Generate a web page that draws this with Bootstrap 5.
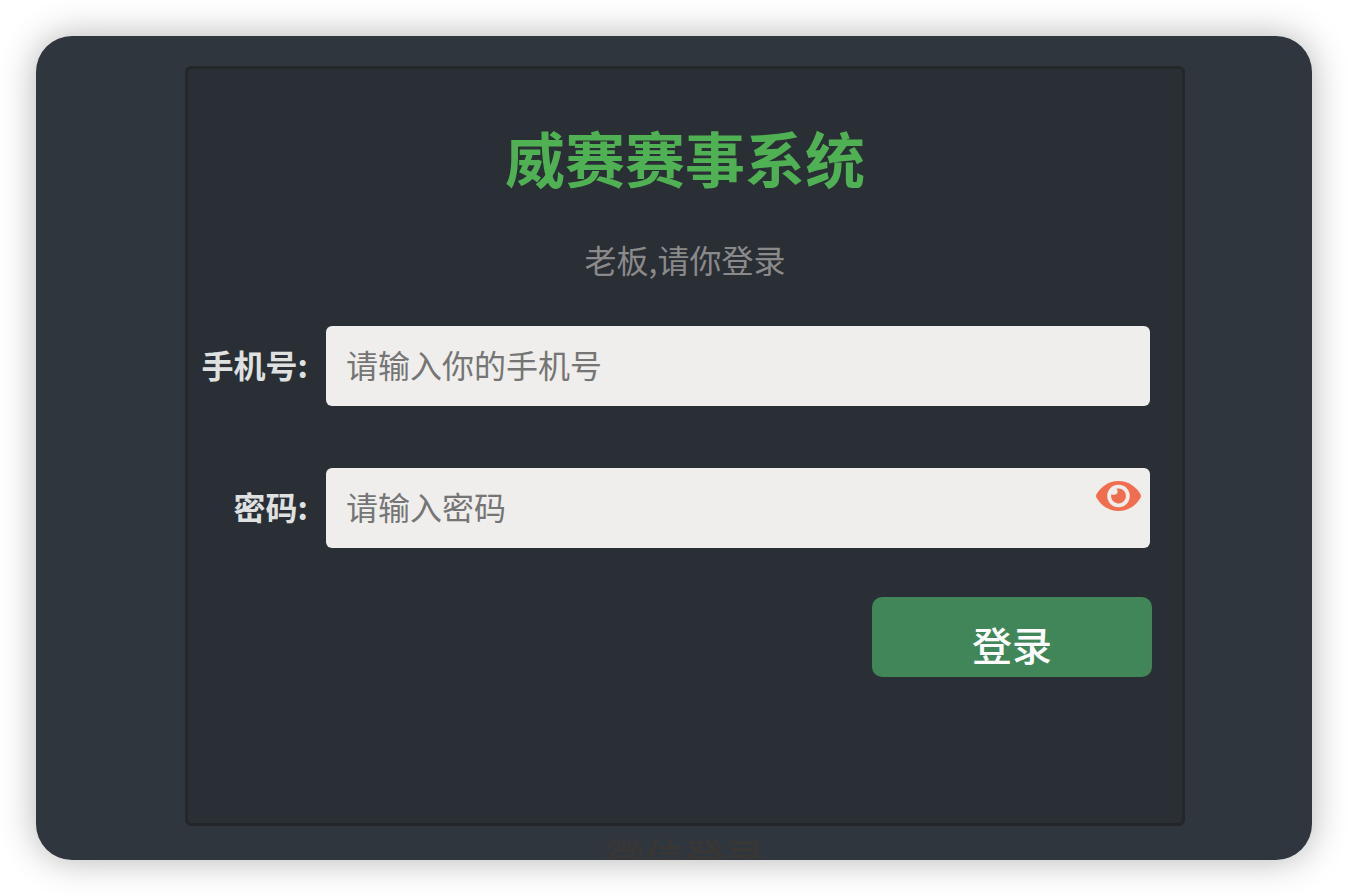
<!DOCTYPE html>
<html lang="zh-CN">
<head>
<meta charset="utf-8">
<meta name="viewport" content="width=device-width, initial-scale=1">
<title>威赛赛事系统</title>
<link href="https://cdn.jsdelivr.net/npm/bootstrap@5.3.0/dist/css/bootstrap.min.css" rel="stylesheet">
<style>
  body { font-family: "Noto Sans CJK SC", sans-serif; background: #fff; }
  .page-wrap { height: 100vh; padding: 36px; }
  .app-window { background: #30363e; border-radius: 36px; box-shadow: 0 0 36px rgba(0, 0, 0, .3); }
  .window-body { height: 100%; padding: 30px 0 0 22px; border-radius: 36px; }
  .login-panel { width: 100%; max-width: 1000px; padding: 46px 0 146px; background: #2a2e35; border: 3px solid #23272a; border-radius: 6px; }
  .login-title { color: #50b154; font-size: 60px; line-height: 84px; }
  .login-hint { color: #8a8a8a; font-size: 32px; line-height: 48px; margin: 36px 0 43px; }
  .field-row { gap: 18px; margin-bottom: 62px; padding-right: 32px; }
  .field-row.last-field { margin-bottom: 49px; }
  .field-label { width: 120px; color: #dfe1e1; font-size: 32px; line-height: 48px; padding-bottom: 4px; }
  .field-input, .field-input:focus { height: 80px; padding: 0 20px 4px; font-size: 32px; background: #efeeec; border: 0; border-radius: 6px; }
  .field-input::placeholder { color: #757575; opacity: 1; }
  .eye-toggle { top: 13px; right: 9px; width: 45px; height: 30px; line-height: 0; }
  .login-actions { padding-right: 30px; }
  .login-btn { width: 280px; height: 80px; padding: 14px 0 0; font-size: 40px; line-height: 60px; color: #fff; background: #418658; border-radius: 10px; }
  .login-btn:hover { color: #fff; background: #38764d; }
  .wechat-link { color: #383736; font-size: 40px; line-height: 60px; }
</style>
</head>
<body>
<div class="page-wrap">
  <main class="app-window h-100">
    <div class="window-body overflow-hidden d-flex flex-column align-items-center">
      <form class="login-panel flex-shrink-0">
        <h1 class="login-title fw-bold text-center mb-0">威赛赛事系统</h1>
        <p class="login-hint text-center">老板,请你登录</p>
        <div class="field-row d-flex align-items-center">
          <label class="field-label fw-bold text-end text-nowrap flex-shrink-0" for="phone">手机号:</label>
          <input class="form-control field-input" id="phone" type="tel" placeholder="请输入你的手机号">
        </div>
        <div class="field-row last-field d-flex align-items-center">
          <label class="field-label fw-bold text-end text-nowrap flex-shrink-0" for="password">密码:</label>
          <div class="position-relative flex-grow-1">
            <input class="form-control field-input" id="password" type="password" placeholder="请输入密码">
            <button class="eye-toggle btn p-0 border-0 position-absolute" type="button" aria-label="显示密码">
              <svg width="45" height="30" viewBox="0 0 45 30" aria-hidden="true">
                <path fill="#ef6e50" d="M22.500 0C12.500 0 4.500 6 .4 13.500Q-.3 15 .4 16.500C4.500 24 12.500 30 22.500 30S40.500 24 44.600 16.500Q45.300 15 44.600 13.500C40.500 6 32.500 0 22.500 0Z"/>
                <circle cx="22.500" cy="15" r="11.300" fill="#efeeec"/>
                <path fill="#ef6e50" d="M22 7.500A7.500 7.500 0 1 1 15.200 13.200Q17.300 14.600 19.500 13.600Q22.200 12.300 21.400 9.200Q21.100 8.200 20.500 7.700Z"/>
              </svg>
            </button>
          </div>
        </div>
        <div class="login-actions d-flex justify-content-end">
          <button class="login-btn btn fw-medium border-0" type="submit">登录</button>
        </div>
      </form>
      <a class="wechat-link fw-medium text-decoration-none flex-shrink-0" href="#">微信登录</a>
    </div>
  </main>
</div>
<script src="https://cdn.jsdelivr.net/npm/bootstrap@5.3.0/dist/js/bootstrap.bundle.min.js"></script>
</body>
</html>
